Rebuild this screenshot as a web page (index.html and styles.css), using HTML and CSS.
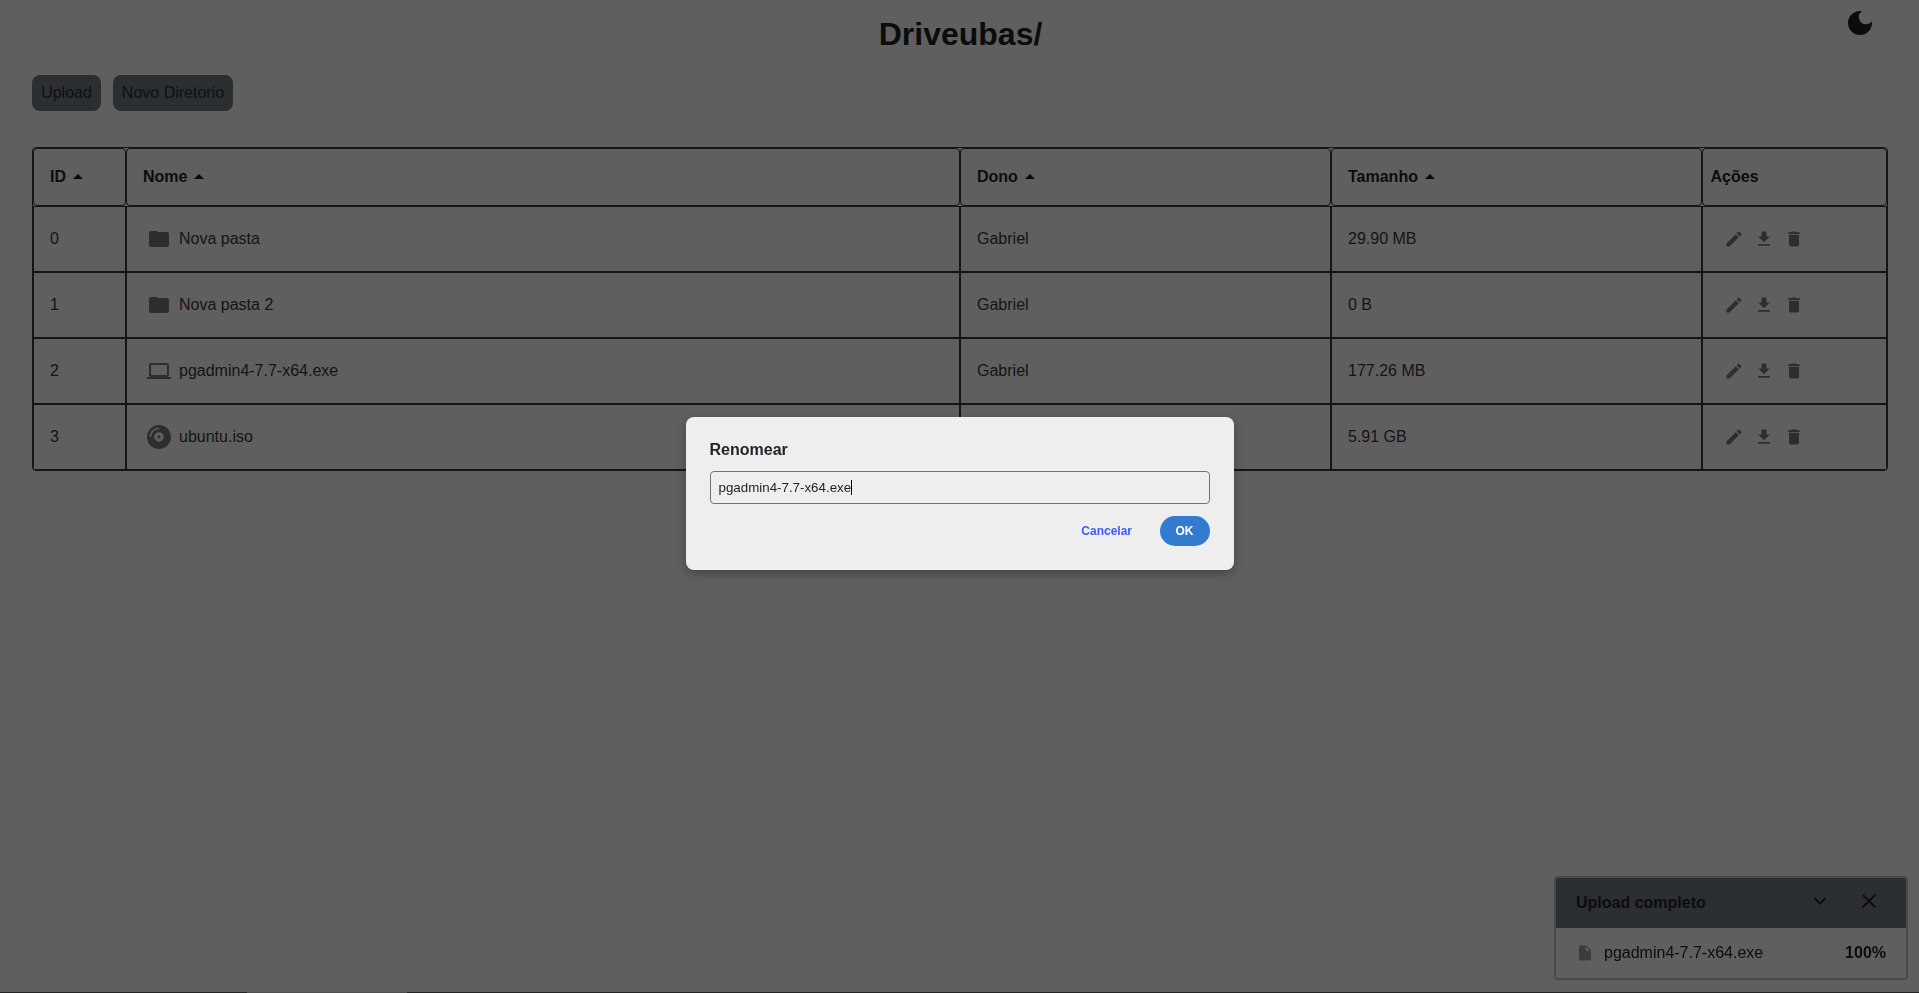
FILE: index.html
```html
<!DOCTYPE html>
<html lang="pt-BR">
<head>
<meta charset="utf-8">
<title>Driveubas</title>
<link rel="stylesheet" href="styles.css">
</head>
<body>
<svg class="defs" aria-hidden="true">
  <symbol id="up" viewBox="0 0 24 24"><path d="M7 14l5-5 5 5z"/></symbol>
  <symbol id="folder" viewBox="0 0 24 24"><path d="M10 4H4c-1.1 0-1.99.9-1.99 2L2 18c0 1.1.9 2 2 2h16c1.1 0 2-.9 2-2V7c0-1.1-.9-2-2-2h-9l-1-1z"/></symbol>
  <symbol id="laptop" viewBox="0 0 24 24"><path d="M20 18c1.1 0 2-.9 2-2V6c0-1.1-.9-2-2-2H4c-1.1 0-2 .9-2 2v10c0 1.1.9 2 2 2H0v2h24v-2h-4zM4 6h16v10H4V6z"/></symbol>
  <symbol id="disc" viewBox="0 8 496 496"><path d="M248 8C111 8 0 119 0 256s111 248 248 248 248-111 248-248S385 8 248 8zM88 256H56c0-105.9 86.1-192 192-192v32c-88.2 0-160 71.8-160 160zm160 96c-53 0-96-43-96-96s43-96 96-96 96 43 96 96-43 96-96 96zm0-128c-17.7 0-32 14.3-32 32s14.3 32 32 32 32-14.3 32-32-14.3-32-32-32z"/></symbol>
  <symbol id="edit" viewBox="0 0 24 24"><path d="M3 17.25V21h3.75L17.81 9.94l-3.75-3.75L3 17.25zM20.71 7.04a.996.996 0 0 0 0-1.41l-2.34-2.34a.996.996 0 0 0-1.41 0l-1.83 1.83 3.75 3.75 1.83-1.83z"/></symbol>
  <symbol id="download" viewBox="0 0 24 24"><path d="M19 9h-4V3H9v6H5l7 7 7-7zM5 18v2h14v-2H5z"/></symbol>
  <symbol id="trash" viewBox="0 0 24 24"><path d="M6 19c0 1.1.9 2 2 2h8c1.1 0 2-.9 2-2V7H6v12zM19 4h-3.500l-1-1h-5l-1 1H5v2h14V4z"/></symbol>
  <symbol id="file" viewBox="0 0 24 24"><path d="M6 2c-1.100 0-1.990.9-1.990 2L4 20c0 1.100.89 2 1.990 2H18c1.100 0 2-.9 2-2V8l-6-6H6zm7 7V3.500L18.500 9H13z"/></symbol>
</svg>

<header class="top">
  <h1 class="title">Driveubas/</h1>
  <svg class="moon" viewBox="0 0 24 24"><path d="M12 3a9 9 0 1 0 9 9c0-.46-.04-.92-.1-1.36a5.389 5.389 0 0 1-4.400 2.260 5.403 5.403 0 0 1-3.140-9.800c-.44-.06-.9-.1-1.360-.1z"/></svg>
</header>

<main class="content">
  <div class="toolbar">
    <button class="btn btn-upload">Upload</button>
    <button class="btn btn-dir">Novo Diretorio</button>
  </div>
  <div class="table">
    <div class="row head">
      <div class="cell">ID<svg class="i24"><use href="#up"/></svg></div>
      <div class="cell">Nome<svg class="i24"><use href="#up"/></svg></div>
      <div class="cell">Dono<svg class="i24"><use href="#up"/></svg></div>
      <div class="cell">Tamanho<svg class="i24"><use href="#up"/></svg></div>
      <div class="cell plain">Ações</div>
    </div>
    <div class="row">
      <div class="cell">0</div>
      <div class="cell name"><svg class="i24"><use href="#folder"/></svg>Nova pasta</div>
      <div class="cell">Gabriel</div>
      <div class="cell">29.90 MB</div>
      <div class="cell actions"><svg class="i20"><use href="#edit"/></svg><svg class="i20"><use href="#download"/></svg><svg class="i20"><use href="#trash"/></svg></div>
    </div>
    <div class="row">
      <div class="cell">1</div>
      <div class="cell name"><svg class="i24"><use href="#folder"/></svg>Nova pasta 2</div>
      <div class="cell">Gabriel</div>
      <div class="cell">0 B</div>
      <div class="cell actions"><svg class="i20"><use href="#edit"/></svg><svg class="i20"><use href="#download"/></svg><svg class="i20"><use href="#trash"/></svg></div>
    </div>
    <div class="row">
      <div class="cell">2</div>
      <div class="cell name"><svg class="i24"><use href="#laptop"/></svg>pgadmin4-7.7-x64.exe</div>
      <div class="cell">Gabriel</div>
      <div class="cell">177.26 MB</div>
      <div class="cell actions"><svg class="i20"><use href="#edit"/></svg><svg class="i20"><use href="#download"/></svg><svg class="i20"><use href="#trash"/></svg></div>
    </div>
    <div class="row">
      <div class="cell">3</div>
      <div class="cell name"><svg class="i24"><use href="#disc"/></svg>ubuntu.iso</div>
      <div class="cell"></div>
      <div class="cell">5.91 GB</div>
      <div class="cell actions"><svg class="i20"><use href="#edit"/></svg><svg class="i20"><use href="#download"/></svg><svg class="i20"><use href="#trash"/></svg></div>
    </div>
  </div>
</main>

<aside class="toast">
  <div class="toast-head">
    <span class="toast-title">Upload completo</span>
    <svg class="i24" viewBox="0 0 24 24"><path d="M7.410 8.590L12 13.170l4.590-4.580L18 10l-6 6-6-6 1.410-1.410z"/></svg>
    <svg class="i24" viewBox="0 0 24 24"><path d="M19 6.410L17.590 5 12 10.590 6.410 5 5 6.410 10.590 12 5 17.590 6.410 19 12 13.410 17.590 19 19 17.590 13.410 12z"/></svg>
  </div>
  <div class="toast-body">
    <svg class="file-icon"><use href="#file"/></svg>
    <span class="toast-file">pgadmin4-7.7-x64.exe</span>
    <strong>100%</strong>
  </div>
</aside>

<div class="backdrop">
  <div class="dialog" role="dialog">
    <h2 class="dialog-title">Renomear</h2>
    <div class="field">pgadmin4-7.7-x64.exe<span class="caret"></span></div>
    <div class="dialog-actions">
      <button class="cancel">Cancelar</button>
      <button class="ok">OK</button>
    </div>
  </div>
</div>
<div class="bottom-edge"><div class="edge-light"></div></div>
</body>
</html>
```

FILE: styles.css
```css
* { box-sizing: border-box; }

body {
  margin: 0;
  height: 993px;
  overflow: hidden;
  background: #eee;
  color: #353535;
  font: 16px/18px "Liberation Sans", Arial, sans-serif;
}

svg { display: block; flex: none; fill: currentColor; }
button { border: 0; font-family: inherit; padding: 0; }
.defs { display: none; }
.i24 { width: 24px; height: 24px; }
.i20 { width: 20px; height: 20px; }

.top {
  display: grid;
  grid-template-columns: 1fr auto 1fr;
  height: 75px;
  padding: 7px 43px 0;
  color: #1e1e1e;
}
.title { grid-column: 2; margin: 9px 0 0; padding-left: 2px; font-size: 32px; line-height: 36px; }
.moon { justify-self: end; width: 32px; height: 32px; }

.content { padding: 0 31px 0 32px; }
.toolbar { display: flex; gap: 12px; margin-bottom: 36px; }
.btn {
  height: 36px;
  border-radius: 8px;
  background: #6c757d;
  color: #2a2a2a;
  font-size: 16px;
}
.btn-upload { width: 69px; }
.btn-dir { width: 120px; }

.table { border: 1px solid #353535; border-radius: 4px; overflow: hidden; }
.row { display: grid; grid-template-columns: 93px 834px 371px 371px 1fr; height: 66px; }
.cell { display: flex; align-items: center; padding: 0 16px; border: 1px solid #353535; }
.head { height: 58px; color: #1e1e1e; font-weight: bold; }
.head .cell { border-radius: 4px; }
.head .plain { padding-left: 7.5px; }
.name { gap: 8px; padding-left: 20px; }
.name svg, .actions { color: #6c757d; }
.actions { gap: 10px; padding-left: 21px; }

.toast {
  position: fixed;
  right: 11px;
  bottom: 13px;
  width: 354px;
  height: 104px;
  border: 2px solid #b9b9b9;
  border-radius: 4px;
  overflow: hidden;
  color: #212121;
}
.toast-head {
  display: flex;
  gap: 25px;
  height: 50px;
  padding: 11px 25px 0 20px;
  background: #6c757d;
}
.toast-title { flex: 1; padding-top: 5px; font-weight: bold; }
.toast-body { display: flex; align-items: center; height: 50px; padding: 0 20px; }
.toast-file { flex: 1; padding-left: 10px; }
.file-icon { width: 18px; height: 18px; color: #969696; }

.backdrop {
  position: fixed;
  inset: 0;
  display: flex;
  align-items: center;
  justify-content: center;
  padding-bottom: 6px;
  background: rgba(0, 0, 0, 0.6);
}
.dialog {
  width: 548px;
  height: 153px;
  padding: 24px;
  border-radius: 8px;
  background: #eee;
  box-shadow: 0 4px 12px rgba(0, 0, 0, 0.3);
  color: #212529;
}
.dialog-title { margin: 0 0 12px; font-size: 16px; line-height: 18px; }
.field {
  display: flex;
  align-items: center;
  height: 33px;
  padding: 0 8px;
  border: 1px solid #6c757d;
  border-radius: 4px;
  font-size: 13.333px;
}
.caret { width: 1px; height: 15px; background: #000; }
.dialog-actions { display: flex; justify-content: flex-end; gap: 27.5px; margin-top: 12px; }
.cancel, .ok { height: 30px; font-size: 12px; font-weight: bold; }
.cancel { background: none; color: #3b5bfd; }
.ok { width: 50px; border-radius: 15px; background: #327bce; color: #fff; }

.bottom-edge { position: fixed; inset: 992px 0 0; padding-left: 247px; background: #232323; }
.edge-light { width: 160px; height: 1px; background: #4f4f4f; }
```
